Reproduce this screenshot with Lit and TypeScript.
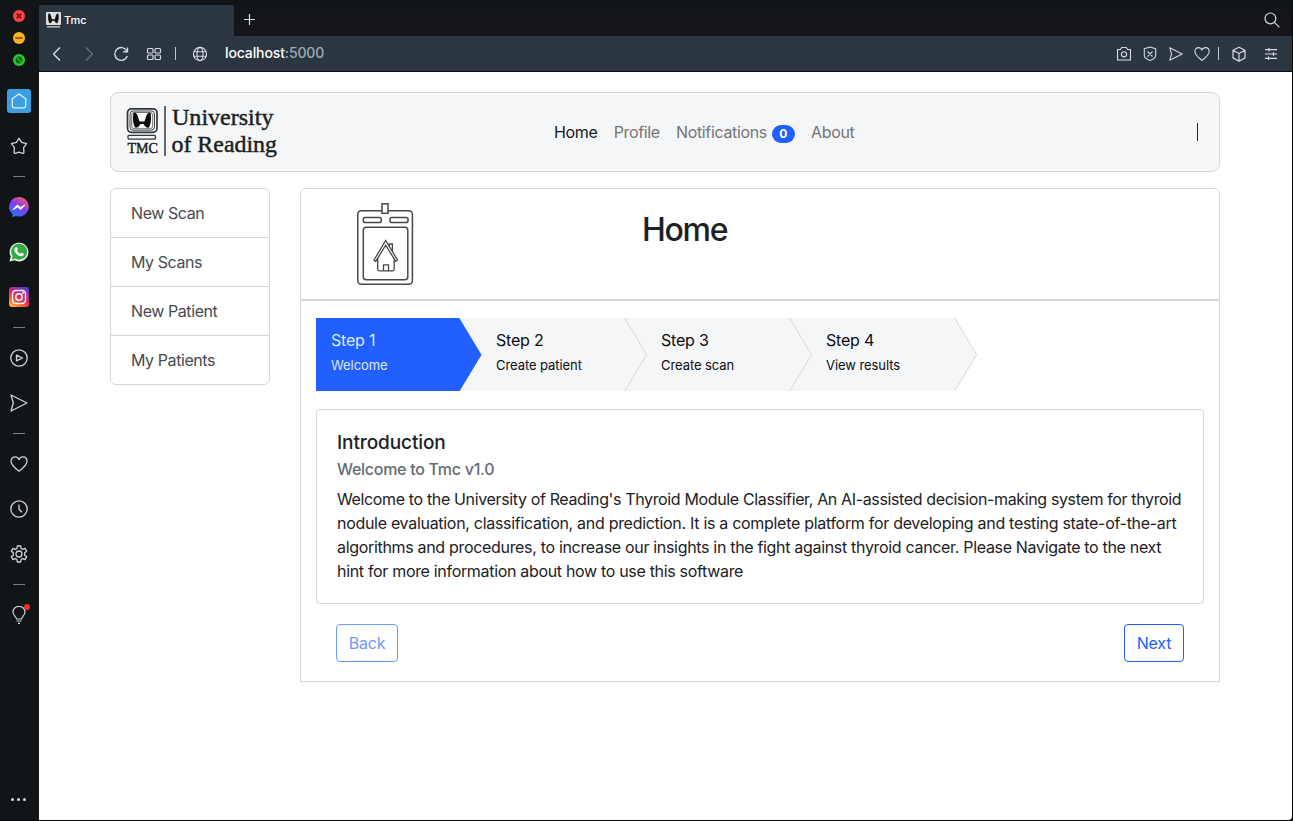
import { LitElement, html, css, svg, nothing } from "lit";
import { customElement, property } from "lit/decorators.js";
import { styleMap } from "lit/directives/style-map.js";

const paths: Record<string, unknown> = {
  star: svg`<path d="M9 1.300L11.600 5.300 16.600 6.700 13.600 10.600 13.900 15.300a1 1 0 0 1-1.300 1L9 15.200 5.400 16.300a1 1 0 0 1-1.300-1L4.400 10.600 1.400 6.700 6.400 5.300z"/>`,
  play: svg`<circle cx="9" cy="9" r="8.2"/><path d="M6.500 6.2v5.600l6-2.8z"/>`,
  send: svg`<path d="M1 1l16 8-16 8 2.3-8z"/>`,
  heart: svg`<path d="M9 16.2C6 13.8 1 10.3 1 6.200C1 3.500 2.800 1.800 5 1.800C7 1.800 8.400 3 9 4.600C9.600 3 11 1.800 13 1.800C15.200 1.800 17 3.500 17 6.200C17 10.300 12 13.800 9 16.200z"/>`,
  clock: svg`<circle cx="9" cy="9" r="8.2"/><path d="M9 4.500V9l2.800 3.200"/>`,
  gear: svg`<path d="M7.300 1h3.400l.4 2.500 1.600.9 2.300-1 1.700 2.900-2 1.500v2.400l2 1.500-1.700 2.900-2.300-1-1.600.9-.4 2.500H7.300l-.4-2.500-1.600-.9-2.300 1-1.700-2.900 2-1.500V7.800l-2-1.500L3 3.400l2.300 1 1.600-.9z"/><circle cx="9" cy="9" r="3"/>`,
  bulb: svg`<path d="M6.500 13C6.500 10.800 3 9.600 3 6A6 5.600 0 0 1 15 6C15 9.600 11.500 10.800 11.500 13z"/><path d="M6.500 15h5M8 17.300h2"/>`,
  back: svg`<path d="M12 2.500L5.500 9l6.500 6.500"/>`,
  forward: svg`<path d="M6 2.500L12.500 9 6 15.500"/>`,
  reload: svg`<path d="M14.800 5.800A6.400 6.400 0 1 0 15.300 11M15.500 2.500v4.300h-4.300"/>`,
  tiles: svg`<rect x="2.500" y="3.500" width="5.500" height="4.500" rx="1"/><rect x="10" y="3.500" width="5.500" height="4.500" rx="1"/><rect x="2.500" y="10" width="5.500" height="4.500" rx="1"/><rect x="10" y="10" width="5.500" height="4.500" rx="1"/>`,
  globe: svg`<circle cx="9" cy="9" r="6.600"/><ellipse cx="9" cy="9" rx="3" ry="6.600"/><path d="M3 6.800h12M3 11.200h12"/>`,
  camera: svg`<path d="M2.500 4.500h3l1.200-2h4.600l1.200 2h3v10.500h-13z"/><circle cx="9" cy="9.300" r="2.600"/>`,
  shield: svg`<path d="M9 2l5.700 1.700v6.800c0 2.700-3 4-5.700 5-2.700-1-5.700-2.300-5.700-5V3.700zM6.500 6.500l5 5M11.500 6.500l-5 5"/>`,
  cube: svg`<path d="M9 2.300l6 3v7.600l-6 3.300-6-3.300V5.300zM3 5.300l6 3.200 6-3.200M9 8.500v7.700"/>`,
  tune: svg`<path d="M3 4.700h12M3 9h12M3 13.300h12M7 3v3.400M11.500 7.300v3.400M6.500 11.600V15"/>`,
  search: svg`<circle cx="7.400" cy="7.400" r="5.400"/><path d="M11.400 11.400l5 5"/>`,
  plus: svg`<path d="M9.500 3v11M4 8.500h11"/>`,
};

const lung = svg`<path d="M4 4.500C3.500 2 6 1.500 7.500 4C9 7 9 9.500 9.800 11h4.400C15 9.500 15 7 16.500 4C18 1.500 20.500 2 20 4.500C20.500 9 20 13 18.500 16.500C16.500 18.500 14.500 15.500 13.500 13.500h-3C9.500 15.500 7.500 18.500 5.500 16.500C4 13 3.500 9 4 4.500z"/>`;

@customElement("line-icon")
class LineIcon extends LitElement {
  @property() name = "";
  @property({ type: Number }) size = 18;
  @property({ type: Number }) weight = 1.2;
  static styles = css`
    :host { display: block; flex: none; }
    svg { display: block; fill: none; stroke: currentColor; stroke-linejoin: round; }
  `;
  render() {
    return html`<svg width=${this.size} height=${this.size} viewBox="0 0 18 18" stroke-width=${this.weight}>${paths[this.name]}</svg>`;
  }
}

@customElement("side-rail")
class SideRail extends LitElement {
  static styles = css`
    :host { display: flex; flex-direction: column; align-items: center; background: #111518; color: #ccd4da; width: 39px; box-sizing: border-box; padding-top: 10px; padding-right: 1px; }
    .lights { display: grid; gap: 10px; }
    svg { display: block; }
    .cell { height: 45px; display: flex; align-items: center; justify-content: center; }
    .home { margin-top: 12.500px; }
    .line { padding-right: 1px; }
    .dash { width: 12px; height: 1px; background: #71808c; margin: 7px 0 8px; }
    .bulb { position: relative; }
    .dot { position: absolute; right: -2px; top: 11px; width: 6px; height: 6px; border-radius: 50%; background: #f92b2b; }
    .more { margin: auto 0 19px; padding-right: 1px; display: flex; gap: 3px; }
    .more i { width: 3px; height: 3px; border-radius: 1.500px; background: #d5dde3; }
  `;
  icon(name: string) {
    return html`<div class="cell line"><line-icon name=${name} weight="1.3"></line-icon></div>`;
  }
  render() {
    return html`
      <div class="lights">
        <svg width="12" height="12"><circle cx="6" cy="6" r="6" fill="#fc4444"/><path d="M3.700 3.700l4.600 4.600M8.300 3.700l-4.600 4.600" stroke="#8a0510" stroke-width="1.700"/></svg>
        <svg width="12" height="12"><circle cx="6" cy="6" r="6" fill="#fdb326"/><path d="M2.300 6h7.400" stroke="#90500b" stroke-width="1.700"/></svg>
        <svg width="12" height="12"><circle cx="6" cy="6" r="6" fill="#28c931"/><circle cx="6" cy="6" r="3.400" fill="#08600b"/><path d="M3.200 3.200l5.600 5.600" stroke="#28c931" stroke-width="1.200"/></svg>
      </div>
      <div class="cell home"><svg width="24" height="24"><rect width="24" height="24" rx="3" fill="#3b9fe3"/><path d="M5.300 9.800L12 5l6.700 4.800V17a1.800 1.800 0 0 1-1.800 1.800H7.100A1.800 1.800 0 0 1 5.300 17z" fill="none" stroke="#e4f3fd" stroke-width="1.300" stroke-linejoin="round"/></svg></div>
      <div class="cell"><line-icon name="star" weight="1.3"></line-icon></div>
      <div class="dash"></div>
      <div class="cell"><svg width="20" height="20"><defs><linearGradient id="m" x1=".15" y1="1" x2=".8" y2="0"><stop offset="0" stop-color="#1683ff"/><stop offset=".5" stop-color="#7a3cf5"/><stop offset="1" stop-color="#ff5968"/></linearGradient></defs><path d="M10 0A10 9.700 0 1 1 7 19L3.500 20V17A9.800 9.700 0 0 1 10 0z" fill="url(#m)"/><path d="M4 12.500L8.300 8l3 2.500L16 8l-4.300 4.600-3-2.500z" fill="#fff" stroke="#fff"/></svg></div>
      <div class="cell"><svg width="20" height="20"><path d="M.5 19.600l1.300-5A9.400 9.400 0 1 1 5.500 18.300z" fill="#eef6ee"/><path d="M2.700 17.400l.9-3.200A8 8 0 1 1 6.200 16.600z" fill="#35a943"/><path d="M6.900 5.200l1 .1 1 2.300-.8 1.200c.8 1.500 1.800 2.300 3.300 3l1.100-1.200 2.300 1.200c.2 1.800-1.500 2.800-3 2.500C8.500 13.700 5.500 10.500 5.300 7.900c-.1-1.300.8-2.500 1.600-2.700z" fill="#fff"/></svg></div>
      <div class="cell"><svg width="20" height="20"><defs><linearGradient id="g" x1=".1" y1="1" x2=".7" y2="0"><stop offset="0" stop-color="#ffc63d"/><stop offset=".3" stop-color="#f65b32"/><stop offset=".6" stop-color="#d32675"/><stop offset="1" stop-color="#5b3fc5"/></linearGradient></defs><rect width="20" height="20" rx="3" fill="url(#g)"/><g fill="none" stroke="#fff" stroke-width="1.400"><rect x="3.500" y="3.500" width="13" height="13" rx="3.500"/><circle cx="10" cy="10" r="3.200"/></g><circle cx="14" cy="6" r=".9" fill="#fff"/></svg></div>
      <div class="dash"></div>
      ${this.icon("play")}${this.icon("send")}
      <div class="dash"></div>
      ${this.icon("heart")}${this.icon("clock")}${this.icon("gear")}
      <div class="dash"></div>
      <div class="cell bulb"><line-icon name="bulb"></line-icon><span class="dot"></span></div>
      <div class="more"><i></i><i></i><i></i></div>
    `;
  }
}

@customElement("browser-chrome")
class BrowserChrome extends LitElement {
  static styles = css`
    :host { display: block; height: 72px; box-sizing: border-box; border-bottom: 1px solid #090b0e; color: #d4dce1; font-family: Inter, sans-serif; }
    .tabs { height: 36px; display: flex; align-items: center; background: linear-gradient(#111518, #16161a); }
    .tab { align-self: end; width: 195px; height: 31px; box-sizing: border-box; background: #2c3640; border-radius: 2px 2px 0 0; display: flex; align-items: center; padding-left: 7px; gap: 3px; color: #fff; font-size: 11px; font-weight: 500; letter-spacing: -.1px; }
    .tab span { padding-bottom: 2px; }
    .tab svg { display: block; margin-bottom: 1px; }
    .plus { margin-left: 6px; margin-top: 4px; }
    .search { margin: 3px 11px 0 auto; }
    .bar { height: 35px; background: #2c3640; display: flex; align-items: center; padding: 0 12px 0 9px; }
    .dim { color: #66717a; margin: 0 14px; }
    .tiles { margin: 0 12.500px 0 14.500px; }
    .sep { width: 1px; height: 13px; background: #c0c8ce; }
    .globe { margin: 0 16px 0 15px; }
    .url { font-size: 14px; font-weight: 500; color: #fff; letter-spacing: -.12px; line-height: 18px; padding-bottom: 2px; }
    .url span { color: #9eabb5; }
    .tools { margin-left: auto; display: flex; align-items: center; gap: 8px; }
    .heart { margin-left: 3px; }
    .send { margin-left: 2px; }
    .end { display: flex; align-items: center; gap: 14px; margin-left: 11px; }
  `;
  render() {
    return html`
      <div class="tabs">
        <div class="tab"><svg width="15" height="16"><rect width="15" height="13" rx="1" fill="#ddd"/><path d="M1 14.900h13" stroke="#ddd" stroke-width="1.200"/><g transform="translate(-.4 0) scale(.65)" fill="#111">${lung}</g></svg><span>Tmc</span></div>
        <line-icon class="plus" name="plus"></line-icon>
        <line-icon class="search" name="search"></line-icon>
      </div>
      <div class="bar">
        <line-icon name="back" weight="1.4"></line-icon>
        <line-icon class="dim" name="forward" weight="1.3"></line-icon>
        <line-icon name="reload" weight="1.400"></line-icon>
        <line-icon class="tiles" name="tiles"></line-icon>
        <span class="sep"></span>
        <line-icon class="globe" name="globe" weight="1.1"></line-icon>
        <div class="url">localhost<span>:5000</span></div>
        <div class="tools">
          <line-icon name="camera" weight="1.1"></line-icon>
          <line-icon name="shield" weight="1.1"></line-icon>
          <line-icon class="send" name="send" size="14" weight="1.3"></line-icon>
          <line-icon class="heart" name="heart" size="16" weight="1.2"></line-icon>
          <span class="sep"></span>
        </div>
        <div class="end">
          <line-icon name="cube"></line-icon>
          <line-icon name="tune"></line-icon>
        </div>
      </div>
    `;
  }
}

@customElement("step-strip")
class StepStrip extends LitElement {
  static styles = css`
    :host { display: flex; isolation: isolate; }
    .step { display: grid; width: 165px; height: 73px; color: #0b0d0f; }
    .step > * { grid-area: 1 / 1; }
    svg { display: block; overflow: visible; }
    .label { padding: 10px 0 0 15px; }
    .title { font-size: 16px; line-height: 24px; letter-spacing: -.2px; }
    .sub { font-size: 13px; line-height: 20px; margin-top: 3px; letter-spacing: -.07px; }
    .active { color: #dfe9ff; }
  `;
  render() {
    const steps = ["Welcome", "Create patient", "Create scan", "View results"];
    return steps.map((s, i) => html`
      <div class="step ${i === 0 ? "active" : ""}" style=${styleMap({ zIndex: String(steps.length - i) })}>
        <svg width="165" height="73">
          ${i < 3 ? svg`<rect width="165" height="73" fill="#f5f6f8"/>` : nothing}
          <path d="M0 0H143.300L165.500 36.700 143.700 73H0z" fill=${i === 0 ? "#2160ff" : "#f5f6f8"}/>
          ${i > 0 ? svg`<path d="M143.700 0L165.600 36.700 143.700 73" fill="none" stroke="#d6d8da"/>` : nothing}
        </svg>
        <div class="label"><div class="title">Step ${i + 1}</div><div class="sub">${s}</div></div>
      </div>`);
  }
}

@customElement("app-root")
class AppRoot extends LitElement {
  static styles = css`
    :host { display: grid; grid-template-columns: 39px 1fr; width: 1293px; height: 821px; box-sizing: border-box; border-right: 1px solid #050607; border-bottom: 1px solid #050607; background: #111518; overflow: hidden; font-family: Inter, sans-serif; font-size: 16px; color: #1d2125; }
    .window { display: flex; flex-direction: column; min-width: 0; }
    .page { flex: 1; background: #fff; padding: 20px 72px 0 71px; border-bottom-right-radius: 4px; }
    .nav { height: 80px; box-sizing: border-box; border: 1px solid #d5d6d9; border-radius: 8px; background: #f5f6f8; display: grid; grid-template-columns: 443px 1fr auto; align-items: center; }
    .nav svg { display: block; margin-left: 15px; }
    .links { display: flex; gap: 16.300px; color: #747577; letter-spacing: -.36px; line-height: 24px; align-items: center; }
    .links .on { color: #17191b; }
    .note { display: flex; align-items: center; gap: 5px; }
    .badge { background: #2160ff; color: #fff; font-size: 12px; font-weight: 700; line-height: 18px; height: 18px; width: 23px; border-radius: 9px; text-align: center; letter-spacing: 0; margin-top: 3px; }
    .caret { width: 1px; height: 18px; background: #222; margin-right: 21px; }
    .columns { display: grid; grid-template-columns: 160px 920px; gap: 30px; margin-top: 16px; align-items: start; }
    .list { border: 1px solid #d5d6d8; border-radius: 6px; }
    .item { height: 48px; line-height: 48px; padding-left: 20px; color: #464b51; letter-spacing: -.42px; }
    .item + .item { border-top: 1px solid #d5d6d8; }
    .head { height: 112px; box-sizing: border-box; border: 1px solid #d5d6d8; border-radius: 6px 6px 3px 3px; display: grid; grid-template-columns: 341px 1fr; }
    .head svg { display: block; margin: 14px 0 0 56px; }
    .head h1 { margin: 22px 0 0; font-size: 32px; line-height: 38px; font-weight: 500; letter-spacing: -1.300px; }
    .body { border: 1px solid #d5d6d8; height: 382px; box-sizing: border-box; padding: 17px 15px 0; }
    .card { margin-top: 18px; height: 195px; box-sizing: border-box; border: 1px solid #d5d6d8; border-radius: 4px; padding: 21px 20px 20px; white-space: nowrap; }
    .card h2 { margin: 0; font-size: 19px; line-height: 24px; font-weight: 500; letter-spacing: -.1px; }
    .card h3 { margin: 2px 0 6px; font-size: 16px; line-height: 24px; font-weight: 500; color: #646b73; letter-spacing: -.28px; }
    .line { line-height: 24px; }
    .actions { display: flex; justify-content: space-between; padding: 20px 20px 0; }
    .btn { font: inherit; letter-spacing: -.2px; line-height: 24px; height: 38px; box-sizing: border-box; border: 1px solid #2160ff; border-radius: 4px; background: #fff; color: #2160ff; padding: 0; width: 60px; }
    .back { width: 62px; opacity: .65; }
  `;
  render() {
    const items = ["New Scan", "My Scans", "New Patient", "My Patients"];
    const lines: [string, number][] = [
      ["Welcome to the University of Reading's Thyroid Module Classifier, An AI-assisted decision-making system for thyroid", -0.36],
      ["nodule evaluation, classification, and prediction. It is a complete platform for developing and testing state-of-the-art", -0.3],
      ["algorithms and procedures, to increase our insights in the fight against thyroid cancer. Please Navigate to the next", -0.32],
      ["hint for more information about how to use this software", -0.32],
    ];
    return html`
      <side-rail></side-rail>
      <div class="window">
        <browser-chrome></browser-chrome>
        <div class="page">
          <div class="nav">
            <svg width="154" height="54" viewBox="0 0 154 54">
              <g fill="none" stroke="#333638">
                <rect x="1.500" y="3.800" width="29.500" height="23.500" rx="4" stroke-width="1.700"/>
                <rect x="4" y="6" width="24.500" height="19.200" rx="3" stroke-width=".9"/>
                <rect x="5.700" y="7.500" width="21" height="16.200" rx="2.500" stroke-width=".7"/>
                <rect x="2" y="30.300" width="27.500" height="3.800" rx="1" stroke-width="1.300"/>
                <path d="M39 1v50" stroke-width="1.500"/>
              </g>
              <g transform="translate(2.800 5.300) scale(1.1 1.02)" fill="#0b0b0c">${lung}</g>
              <g fill="#1c1e20" font-family="Liberation Serif, serif" stroke="#1c1e20" stroke-width=".45">
                <text x="1.500" y="48.300" font-size="15" textLength="30.500" lengthAdjust="spacingAndGlyphs">TMC</text>
                <text x="46" y="20.300" font-size="23" textLength="101.500" lengthAdjust="spacingAndGlyphs">University</text>
                <text x="45.500" y="46.800" font-size="23" textLength="105.500" lengthAdjust="spacingAndGlyphs">of Reading</text>
              </g>
            </svg>
            <div class="links"><span class="on">Home</span><span>Profile</span><span class="note">Notifications<span class="badge">0</span></span><span>About</span></div>
            <span class="caret"></span>
          </div>
          <div class="columns">
            <div class="list">${items.map((t) => html`<div class="item">${t}</div>`)}</div>
            <div>
              <div class="head">
                <svg width="57" height="84" viewBox="0 0 57 84" fill="none" stroke="#484848" stroke-width="1.500">
                  <rect x=".8" y="7.800" width="54.600" height="73.500" rx="3.500"/>
                  <rect x="25" y=".8" width="6" height="9.500" fill="#fff"/>
                  <rect x="6.300" y="14.500" width="18" height="5" rx="1.800"/>
                  <rect x="33" y="14.500" width="18" height="5" rx="1.800"/>
                  <rect x="6.300" y="24.200" width="44.500" height="52.500" rx="3"/>
                  <path stroke-width="1.300" d="M17 57L28.700 37.500 40.500 57l-1.800 1.400-10-16.200-10 16.200zM20.700 55v11.300q0 1.500 1.500 1.500h13.500q1.500 0 1.500-1.500V55M26.500 67.800v-6h5v6M32.200 43v-2h3.200v7.200"/>
                </svg>
                <h1>Home</h1>
              </div>
              <div class="body">
                <step-strip></step-strip>
                <div class="card">
                  <h2>Introduction</h2>
                  <h3>Welcome to Tmc v1.0</h3>
                  ${lines.map(([text, tracking]) => html`<div class="line" style=${styleMap({ letterSpacing: `${tracking}px` })}>${text}</div>`)}
                </div>
                <div class="actions"><button class="btn back">Back</button><button class="btn">Next</button></div>
              </div>
            </div>
          </div>
        </div>
      </div>
    `;
  }
}
